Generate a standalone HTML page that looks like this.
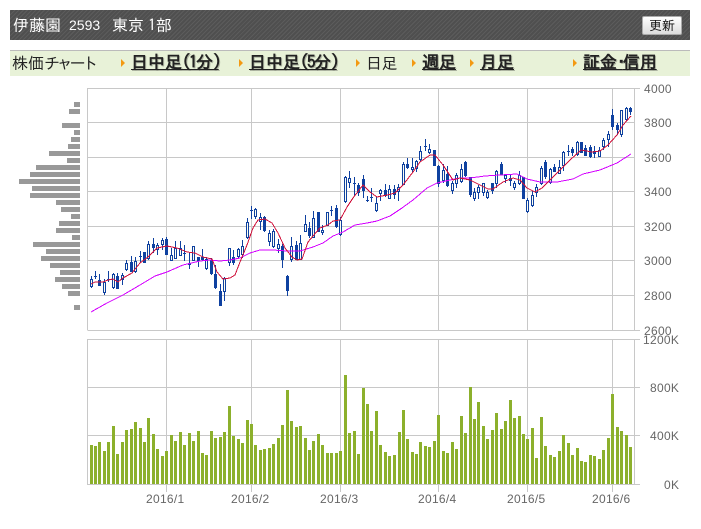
<!DOCTYPE html>
<html lang="ja"><head><meta charset="utf-8"><title>伊藤園 2593</title>
<style>
html,body{margin:0;padding:0;background:#fff;width:701px;height:529px;overflow:hidden}
body{position:relative;font-family:"Liberation Sans","IPAGothic","Noto Sans CJK JP",sans-serif}
.a{position:absolute;white-space:nowrap}
#hd{left:10px;top:10px;width:680px;height:30px;background:#555 repeating-linear-gradient(135deg,#5c5c5c 0,#5c5c5c 1px,#4f4f4f 1px,#4f4f4f 3px)}
.h{color:#fff;font-family:"IPAGothic","Noto Sans CJK JP",sans-serif;font-size:16px;line-height:16px;top:17px}
#btn{left:642px;top:16px;width:38px;height:17px;border:1px solid #aaa;border-radius:2px;background:linear-gradient(#fff,#ddd);color:#111;font:13px/17px "IPAGothic","Noto Sans CJK JP",sans-serif;text-align:center}
#nav{left:10px;top:50px;width:680px;height:25px;background:#e8f2d8;border-top:1px solid #bbb}
.n{font-family:"IPAGothic","Noto Sans CJK JP",sans-serif;font-size:16px;line-height:16px;top:55px;color:#222}
.l{font-size:17px;font-weight:bold;text-decoration:underline;text-shadow:1px 1px 0 rgba(0,0,0,.25)}
.k{letter-spacing:-3.2px}
.p{letter-spacing:-1.5px}
.q{letter-spacing:-2.8px}
.t{width:0;height:0;top:59px;border-left:4px solid #f39a12;border-top:4px solid transparent;border-bottom:4px solid transparent}
svg{position:absolute;left:0;top:0}
svg text{font-family:"Liberation Sans",sans-serif;font-size:12px;fill:#666;letter-spacing:.3px}
</style></head><body>
<div class="a" id="hd"></div>
<span class="a h" style="left:13px">伊藤園</span>
<span class="a h" style="left:69px;font-family:'Liberation Sans',sans-serif;font-size:14px">2593</span>
<span class="a h" style="left:112px">東京</span>
<span class="a h" style="left:148px">1部</span>
<div class="a" id="btn">更新</div>
<div class="a" id="nav"></div>
<span class="a n" style="left:12px">株価<span class="k">チャート</span></span>
<i class="a t" style="left:121px"></i><span class="a n l" style="left:131px">日中足<span class="p">(1</span>分<span class="q">)</span></span>
<i class="a t" style="left:239px"></i><span class="a n l" style="left:249px">日中足<span class="p">(5</span>分<span class="q">)</span></span>
<i class="a t" style="left:356px"></i><span class="a n" style="left:366px;letter-spacing:-.5px">日足</span>
<i class="a t" style="left:412px"></i><span class="a n l" style="left:422px">週足</span>
<i class="a t" style="left:470px"></i><span class="a n l" style="left:480px">月足</span>
<i class="a t" style="left:573px"></i><span class="a n l" style="left:583px">証金<span class="q">･</span>信用</span>
<svg width="701" height="529" viewBox="0 0 701 529">
<path fill="#999" d="M74 102h6v5h-6zM69 109h11v5H69zM62 123h18v5H62zM74 130h6v5h-6zM71 137h9v5h-9zM68 144h12v5H68zM49 151h31v5H49zM67 158h13v5H67zM36 165h44v5H36zM30 172h50v5H30zM19 179h61v5H19zM32 186h48v5H32zM30 193h50v5H30zM56 200h24v5H56zM61 207h19v5H61zM71 214h9v5h-9zM59 221h21v5H59zM56 228h24v5H56zM72 235h8v5h-8zM33 242h47v5H33zM46 249h34v5H46zM41 256h39v5H41zM50 263h30v5H50zM60 270h20v5H60zM55 277h25v5H55zM62 284h18v5H62zM68 291h12v5H68zM74 305h6v5h-6z"/>
<path fill="none" stroke="#c8c8c8" d="M87.5 88.5H640M87.5 122.5H634.5M87.5 157.5H634.5M87.5 191.5H634.5M87.5 226.5H634.5M87.5 260.5H634.5M87.5 295.5H634.5M87.5 330.5H640M87.5 88V330M166.5 88V330M251.5 88V330M340.5 88V330M438.5 88V330M527.5 88V330M612.5 88V330M634.5 88V330M87.5 339.5H640M87.5 387.5H640M87.5 435.5H640M87.5 484.5H640M87.5 339V485M166.5 339V492M251.5 339V492M340.5 339V492M438.5 339V492M527.5 339V492M612.5 339V492M634.5 339V485"/>
<path fill="none" stroke="#8cb02c" stroke-width="3" d="M91.5 445V484M95.5 446V484M99.5 442V484M104.5 451V484M108.5 442V484M113.5 426V484M117.5 454V484M122.5 442V484M126.5 430V484M131.5 429V484M135.5 422V484M140.5 428V484M144.5 442V484M148.5 418V484M153.5 434V484M157.5 449V484M162.5 456V484M166.5 451V484M171.5 435V484M175.5 441V484M180.5 432V484M184.5 445V484M189.5 433V484M193.5 441V484M198.5 431V484M202.5 453V484M206.5 455V484M211.5 431V484M215.5 438V484M220.5 437V484M224.5 432V484M229.5 406V484M233.5 436V484M238.5 439V484M242.5 443V484M247.5 420V484M251.5 424V484M255.5 445V484M260.5 450V484M264.5 449V484M269.5 448V484M273.5 444V484M278.5 438V484M282.5 425V484M287.5 390V484M291.5 421V484M296.5 427V484M300.5 426V484M305.5 438V484M309.5 450V484M313.5 441V484M318.5 434V484M322.5 445V484M327.5 453V484M331.5 453V484M336.5 453V484M340.5 451V484M345.5 375V484M349.5 433V484M354.5 431V484M358.5 454V484M363.5 388V484M367.5 404V484M371.5 431V484M376.5 411V484M380.5 445V484M385.5 452V484M389.5 456V484M394.5 455V484M399.5 432V484M403.5 410V484M407.5 439V484M412.5 452V484M416.5 454V484M420.5 442V484M425.5 446V484M429.5 447V484M434.5 441V484M438.5 415V484M443.5 451V484M447.5 453V484M452.5 442V484M456.5 449V484M461.5 416V484M465.5 433V484M470.5 387V484M474.5 419V484M478.5 402V484M483.5 426V484M487.5 439V484M492.5 430V484M496.5 413V484M501.5 429V484M505.5 421V484M510.5 400V484M514.5 418V484M519.5 416V484M523.5 434V484M527.5 439V484M532.5 428V484M536.5 458V484M541.5 417V484M545.5 446V484M550.5 455V484M554.5 457V484M559.5 451V484M563.5 435V484M568.5 443V484M572.5 455V484M577.5 448V484M581.5 461V484M585.5 462V484M590.5 455V484M594.5 456V484M599.5 459V484M603.5 450V484M608.5 438V484M612.5 394V484M617.5 427V484M621.5 431V484M626.5 435V484M630.5 447V484"/>
<path fill="none" stroke="#0f41a0" d="M91.5 276V288M95.5 271V279M99.5 274V286M104.5 279V295M108.5 271V282M113.5 273V289M117.5 273V289M122.5 273V285M126.5 260V271M131.5 256V272M135.5 257V273M140.5 251V262M144.5 252V263M148.5 241V260M153.5 238V253M157.5 243V255M162.5 238V250M166.5 237V255M171.5 248V261M175.5 241V259M180.5 241V256M184.5 245V261M189.5 253V269M193.5 246V261M198.5 257V267M202.5 249V261M206.5 257V270M211.5 258V275M215.5 265V289M220.5 284V306M224.5 277V301M229.5 248V266M233.5 250V265M238.5 248V258M242.5 240V258M247.5 218V239M251.5 206V219M255.5 208V219M260.5 213V230M264.5 216V232M269.5 230V246M273.5 229V248M278.5 239V253M282.5 244V268M287.5 275V296M291.5 237V262M296.5 241V260M300.5 235V260M305.5 215V232M309.5 222V238M313.5 211V238M318.5 212V232M322.5 225V235M327.5 212V226M331.5 206V216M336.5 205V228M340.5 217V236M345.5 176V203M349.5 171V188M354.5 177V196M358.5 183V196M363.5 175V198M367.5 196V202M371.5 188V202M376.5 197V212M380.5 189V201M385.5 184V197M389.5 185V199M394.5 185V199M398.5 184V201M403.5 162V185M407.5 158V169M412.5 158V173M416.5 160V172M420.5 146V162M425.5 139V151M429.5 144V154M434.5 150V166M438.5 165V187M443.5 164V183M447.5 166V187M452.5 181V194M456.5 173V188M461.5 164V183M465.5 161V177M470.5 177V197M474.5 188V201M478.5 185V199M483.5 183V196M487.5 190V199M492.5 183V194M496.5 170V188M501.5 162V175M505.5 175V183M510.5 175V186M514.5 181V190M519.5 171V185M523.5 177V199M527.5 198V213M532.5 191V207M536.5 184V197M541.5 166V185M545.5 160V179M550.5 168V184M554.5 164V172M559.5 160V174M563.5 151V171M568.5 145V156M572.5 147V156M577.5 141V156M581.5 142V153M585.5 145V156M590.5 145V158M594.5 146V158M599.5 147V157M603.5 138V150M608.5 131V147M612.5 109V130M617.5 123V135M621.5 110V137M626.5 107V121M630.5 107V115"/>
<path fill="none" stroke="#0f41a0" stroke-width="3" d="M91.5 279V287M95.5 276V277M99.5 280V286M104.5 282V293M108.5 279V280M113.5 274V288M117.5 276V289M122.5 275V280M126.5 263V270M131.5 262V272M135.5 261V272M140.5 256V257M144.5 252V263M148.5 244V259M153.5 244V248M157.5 245V250M162.5 240V245M166.5 239V255M171.5 255V261M175.5 248V259M180.5 248V256M184.5 253V254M189.5 263V265M193.5 246V261M198.5 257V261M202.5 257V260M206.5 259V269M211.5 260V274M215.5 274V288M220.5 291V306M224.5 278V292M229.5 248V263M233.5 257V263M238.5 249V257M242.5 246V255M247.5 222V238M251.5 210V211M255.5 209V217M260.5 217V222M264.5 217V231M269.5 233V242M273.5 231V247M278.5 244V249M282.5 246V260M287.5 276V291M291.5 246V260M296.5 245V260M300.5 243V260M305.5 224V232M309.5 228V236M313.5 218V238M318.5 212V232M322.5 230V233M327.5 212V226M331.5 210V211M336.5 208V227M340.5 220V235M345.5 177V202M349.5 178V183M354.5 183V184M358.5 185V193M363.5 179V191M367.5 200V201M371.5 197V198M376.5 203V211M380.5 190V194M385.5 190V196M389.5 189V199M394.5 189V195M398.5 187V192M403.5 164V185M407.5 164V168M412.5 167V170M416.5 161V169M420.5 151V160M425.5 146V147M429.5 149V153M434.5 150V166M438.5 166V184M443.5 170V181M447.5 174V186M452.5 183V191M456.5 175V184M461.5 169V182M465.5 162V176M470.5 177V195M474.5 192V199M478.5 187V193M483.5 183V193M487.5 192V198M492.5 183V191M496.5 171V184M501.5 164V175M505.5 175V179M510.5 178V181M514.5 183V188M519.5 175V184M523.5 177V199M527.5 200V212M532.5 195V206M536.5 187V193M541.5 168V184M545.5 162V177M550.5 169V183M554.5 167V172M559.5 167V174M563.5 152V166M568.5 151V152M572.5 149V153M577.5 142V155M581.5 142V153M585.5 148V156M590.5 147V157M594.5 151V154M599.5 150V157M603.5 140V147M608.5 134V140M612.5 115V127M617.5 125V130M621.5 110V135M626.5 108V120M630.5 108V112"/>
<path fill="none" stroke="#fffff0" d="M91.5 280V286M104.5 283V292M113.5 275V287M122.5 276V279M126.5 264V269M135.5 262V271M148.5 245V258M157.5 246V249M162.5 241V244M171.5 256V260M175.5 249V258M180.5 249V255M193.5 247V260M206.5 260V268M224.5 279V291M229.5 249V262M238.5 250V256M242.5 247V254M247.5 223V237M255.5 210V216M260.5 218V221M269.5 234V241M273.5 232V246M278.5 245V248M291.5 247V259M300.5 244V259M305.5 225V231M313.5 219V237M322.5 231V232M327.5 213V225M340.5 221V234M345.5 178V201M349.5 179V182M376.5 204V210M380.5 191V193M389.5 190V198M398.5 188V191M403.5 165V184M412.5 168V169M416.5 162V168M420.5 152V159M429.5 150V152M443.5 171V180M452.5 184V190M456.5 176V183M461.5 170V181M474.5 193V198M478.5 188V192M483.5 184V192M487.5 193V197M496.5 172V183M505.5 176V178M514.5 184V187M519.5 176V183M527.5 201V211M532.5 196V205M536.5 188V192M541.5 169V183M550.5 170V182M559.5 168V173M563.5 153V165M577.5 143V154M599.5 151V156M603.5 141V146M608.5 135V139M621.5 111V134M626.5 109V119"/>
<path fill="none" stroke="#d400ff" shape-rendering="crispEdges" d="M91 312L107 303L123 295L140 285L155 276L167 272L183 265L200 261L210 260L220 261L230 260L240 258L250 253L260 250L273 250L287 251L300 251L313 247L323 243L333 236L343 232L355 225L367 223L377 221L390 216L402 208L413 200L427 188L437 183L450 180L460 178L470 178L485 176L500 175L517 174L527 179L540 182L557 182L573 179L583 174L600 170L617 163L631 154"/>
<path fill="none" stroke="#d0103a" shape-rendering="crispEdges" d="M91 284L95 282L103 282L108 280L113 279L118 282L123 278L132 273L140 263L148 257L157 248L167 246L177 248L187 252L195 253L203 257L212 259L217 272L223 279L230 278L235 275L240 262L247 245L253 228L258 220L265 219L272 223L278 233L285 248L292 257L297 260L302 259L308 242L313 236L320 228L328 225L333 221L340 220L347 207L353 198L363 185L370 192L377 197L387 195L395 193L403 185L413 172L420 162L430 155L435 155L443 165L453 180L460 178L470 180L480 185L488 189L493 189L503 182L513 178L520 180L527 188L535 192L542 188L550 180L560 170L570 160L581 150L592 152L600 151L608 145L617 135L623 125L631 116"/>
<text x="644" y="93">4000</text><text x="644" y="127">3800</text><text x="644" y="162">3600</text><text x="644" y="196">3400</text><text x="644" y="231">3200</text><text x="644" y="265">3000</text><text x="644" y="300">2800</text><text x="644" y="335">2600</text>
<text x="643" y="344">1200K</text><text x="650" y="392">800K</text><text x="650" y="440">400K</text><text x="664" y="489">0K</text>
<text x="146" y="503">2016/1</text><text x="231" y="503">2016/2</text><text x="320" y="503">2016/3</text><text x="418" y="503">2016/4</text><text x="507" y="503">2016/5</text><text x="592" y="503">2016/6</text>
</svg>
</body></html>
